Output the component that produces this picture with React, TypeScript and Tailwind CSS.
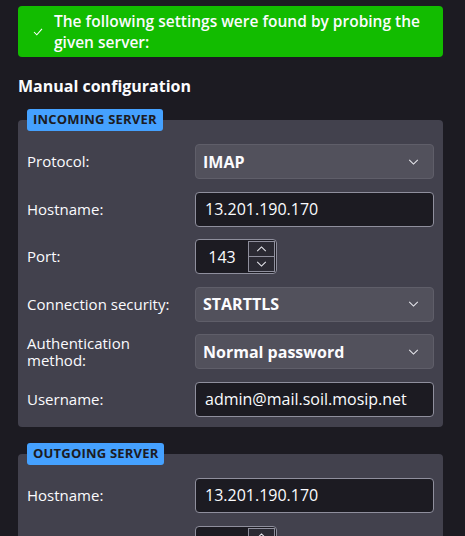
const font = { fontFamily: '"Open Sans", "Noto Sans", sans-serif' }

function Chevron({ up = false, className = '' }: { up?: boolean; className?: string }) {
  return (
    <svg viewBox="0 0 12 7" className={className} fill="none" stroke="currentColor" strokeWidth="1.2">
      {up ? <polyline points="1,6 6,1 11,6" /> : <polyline points="1,1 6,6 11,1" />}
    </svg>
  )
}

function Select({ value }: { value: string }) {
  return (
    <div className="flex h-[35px] w-[239px] items-center justify-between rounded-[4px] border border-[#5f5e69] bg-[#52515c] pl-[7px] pr-[14px]">
      <span className="text-[16px] font-bold text-[#fbfbfe]">{value}</span>
      <Chevron className="h-[6px] w-[11px] text-[#e8e8ee]" />
    </div>
  )
}

function TextInput({ value }: { value: string }) {
  return (
    <div className="flex h-[35px] w-[239px] items-center rounded-[4px] border border-[#8f8f9d] bg-[#1c1b22] px-[9px]">
      <span className="text-[16px] text-[#fbfbfe]">{value}</span>
    </div>
  )
}

function PortInput({ value }: { value: string }) {
  return (
    <div className="flex h-[35px] w-[82px] items-center rounded-[4px] border border-[#8f8f9d] bg-[#1c1b22] pr-[1px]">
      <span className="flex-1 text-center text-[16px] text-[#fbfbfe]">{value}</span>
      <div className="flex h-[31px] w-[27px] flex-col">
        <div className="flex flex-1 items-center justify-center border border-[#8f8f9d] bg-[#2b2a33]">
          <Chevron up className="h-[6px] w-[11px] text-[#e8e8ee]" />
        </div>
        <div className="flex flex-1 items-center justify-center border border-t-0 border-[#8f8f9d] bg-[#2b2a33]">
          <Chevron className="h-[6px] w-[11px] text-[#e8e8ee]" />
        </div>
      </div>
    </div>
  )
}

function Row({ label, children }: { label: string; children: React.ReactNode }) {
  return (
    <div className="flex items-center">
      <div className="w-[168px] pr-2 text-[15px] leading-[17px] text-[#fbfbfe]">{label}</div>
      {children}
    </div>
  )
}

function Fieldset({ legend, children }: { legend: string; children: React.ReactNode }) {
  return (
    <div className="relative rounded-[4px] bg-[#42414d] px-[9px] pb-[10px] pt-[24px]">
      <div className="absolute left-[9px] top-[-11px] flex h-[22px] items-center rounded-[3px] bg-[#45a1ff] px-[6px] text-[13px] font-bold tracking-[0.2px] text-[#1c1b22]">
        {legend}
      </div>
      <div className="flex flex-col gap-[12.6px]">{children}</div>
    </div>
  )
}

export default function App() {
  return (
    <div className="h-[536px] w-[465px] overflow-hidden bg-[#1c1b22] pl-[18px] pr-[22px] pt-[6px]" style={font}>
      <div className="flex h-[51px] items-center rounded-[4px] bg-[#12bc00] pl-[15px] pr-2">
        <svg viewBox="0 0 12 10" className="mr-[11px] h-[8px] w-[10px] shrink-0" fill="none" stroke="#ffffff" strokeWidth="1.3">
          <polyline points="1,5 4.5,8.5 11,1" />
        </svg>
        <p className="text-[15.5px] font-semibold leading-[21px] text-[#fbfbfe]">
          The following settings were found by probing the given server:
        </p>
      </div>

      <h2 className="mt-[19px] text-[16px] font-bold leading-[20px] text-[#fbfbfe]">Manual configuration</h2>

      <div className="mt-[24px]">
        <Fieldset legend="INCOMING SERVER">
          <Row label="Protocol:"><Select value="IMAP" /></Row>
          <Row label="Hostname:"><TextInput value="13.201.190.170" /></Row>
          <Row label="Port:"><PortInput value="143" /></Row>
          <Row label="Connection security:"><Select value="STARTTLS" /></Row>
          <Row label="Authentication method:"><Select value="Normal password" /></Row>
          <Row label="Username:"><TextInput value="admin@mail.soil.mosip.net" /></Row>
        </Fieldset>
      </div>

      <div className="mt-[27px]">
        <Fieldset legend="OUTGOING SERVER">
          <Row label="Hostname:"><TextInput value="13.201.190.170" /></Row>
          <Row label="Port:"><PortInput value="587" /></Row>
          <Row label="Connection security:"><Select value="STARTTLS" /></Row>
        </Fieldset>
      </div>
    </div>
  )
}
